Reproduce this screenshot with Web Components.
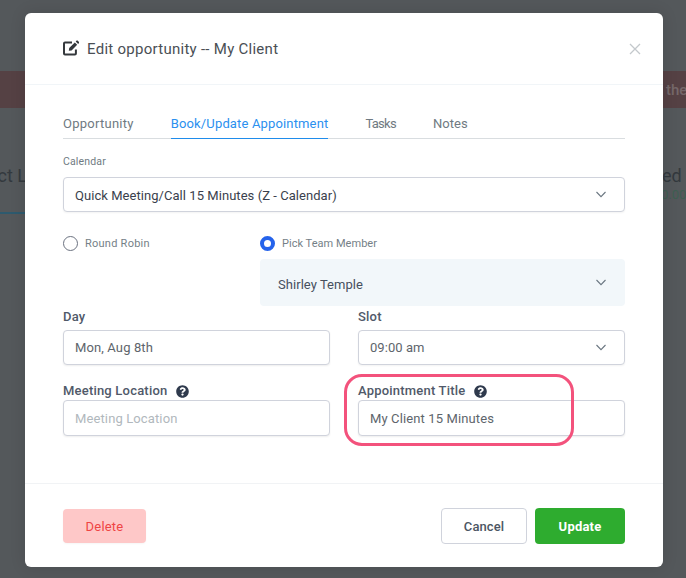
<!DOCTYPE html>
<html>
<head>
<meta charset="utf-8">
<title>Edit opportunity</title>
<style>
  html, body { margin: 0; height: 100%; }
  body { font-family: Roboto, "Liberation Sans", sans-serif; overflow: hidden; }
</style>
</head>
<body>
<page-backdrop>
  <opportunity-modal heading="Edit opportunity -- My Client">
    <tab-bar></tab-bar>
    <form-field caption="Calendar" small>
      <select-box value="Quick Meeting/Call 15 Minutes (Z - Calendar)" strong></select-box>
    </form-field>
    <team-picker></team-picker>
    <div style="display:grid;grid-template-columns:267px 267px;column-gap:28px;row-gap:0">
      <form-field caption="Day"><text-box value="Mon, Aug 8th"></text-box></form-field>
      <form-field caption="Slot"><select-box value="09:00 am"></select-box></form-field>
      <form-field caption="Meeting Location" help tall><text-box placeholder="Meeting Location" tall></text-box></form-field>
      <form-field caption="Appointment Title" help tall marked><text-box value="My Client 15 Minutes" tall></text-box></form-field>
    </div>
  </opportunity-modal>
</page-backdrop>

<script>
const CHEVRON = `<svg width="12" height="8" viewBox="0 0 12 8" fill="none" stroke="currentColor" stroke-width="1.1"><path d="M1.5 1 6 5.6 10.5 1"/></svg>`;
const HELP = `<svg width="13" height="13" viewBox="0 0 512 512" fill="#2f3a4d"><path d="M504 256c0 137-111 248-248 248S8 393 8 256 119 8 256 8s248 111 248 248zM263 90c-54 0-89 23-116 63-4 5-3 12 3 16l35 26c5 4 13 3 17-2 18-23 30-36 57-36 20 0 45 13 45 33 0 15-12 22-32 33-23 13-54 30-54 71v4c0 7 5 12 12 12h56c7 0 12-5 12-12v-1c0-29 83-30 83-106 0-58-60-101-118-101zm-7 243c-25 0-46 21-46 46s21 46 46 46 46-21 46-46-21-46-46-46z"/></svg>`;

class PageBackdrop extends HTMLElement {
  constructor() {
    super();
    this.attachShadow({ mode: 'open' });
    this.shadowRoot.innerHTML = `
      <style>
        :host { display: block; position: relative; width: 686px; height: 578px; background: #54585b; overflow: hidden; color: #33393e; }
        .banner { position: absolute; left: 0; right: 0; top: 71px; height: 37px; background: #554144; }
        .banner span { position: absolute; left: 666px; top: 10px; font-size: 15px; line-height: 18px; color: #75686a; font-weight: 500; white-space: nowrap; }
        .left { position: absolute; left: 0; top: 165px; width: 25px; height: 49px; overflow: hidden; border-bottom: 2px solid #2e5a6e; box-sizing: border-box; }
        .left span { position: absolute; right: -2px; top: 0; font-size: 18px; line-height: 21px; white-space: nowrap; }
        .right { position: absolute; left: 663px; top: 165px; width: 23px; overflow: hidden; white-space: nowrap; }
        .right div { font-size: 18px; line-height: 21px; margin-left: -1px; }
        .right small { display: block; font-size: 13px; line-height: 16px; color: #3e5f52; margin-top: 1px; margin-left: -2px; }
      </style>
      <div class="banner"><span>the</span></div>
      <div class="left"><span>ct L</span></div>
      <div class="right"><div>ed</div><small>0.00</small></div>
      <slot></slot>
    `;
  }
}

class OpportunityModal extends HTMLElement {
  constructor() {
    super();
    this.attachShadow({ mode: 'open' });
    this.shadowRoot.innerHTML = `
      <style>
        :host { display: flex; flex-direction: column; position: absolute; left: 25px; top: 13px; width: 638px; height: 554px; background: #fff; border-radius: 6px; box-shadow: 0 0 16px rgba(0,0,0,.12); }
        header { height: 72px; box-sizing: border-box; padding: 0 21px 0 38px; display: flex; align-items: center; border-bottom: 1px solid #f1f5f8; flex: none; }
        .icon { display: block; margin-right: 8px; margin-top: -2px; }
        h1 { margin: 0; flex: 1; font-size: 15px; line-height: 20px; font-weight: 400; color: #4a4f55; letter-spacing: .27px; }
        .close { display: block; }
        main { flex: 1; padding: 0 38px; }
        footer { height: 84px; box-sizing: border-box; border-top: 1px solid #f1f3f5; padding: 1px 38px 0; display: flex; align-items: center; gap: 8px; flex: none; }
        footer .gap { flex: 1; }
      </style>
      <header>
        <svg class="icon" width="16" height="16" viewBox="0 0 16 16"><path d="M12.9 9.5v3.9c0 .6-.4 1-1 1H2c-.6 0-1-.4-1-1V3.5c0-.6.4-1 1-1h7" fill="none" stroke="#34383c" stroke-width="2"/><path d="M5.8 10.8 6.2 8l5.6-5.6 2.4 2.4L8.6 10.4z M12.7 1.5l.9-.9c.3-.3.7-.3 1 0l1.4 1.4c.3.3.3.7 0 1l-.9.9z" fill="#34383c"/></svg>
        <h1></h1>
        <svg class="close" width="14" height="14" viewBox="0 0 14 14" stroke="#c3c8cc" stroke-width="1.3"><path d="M2 2l10 10M12 2 2 12"/></svg>
      </header>
      <main><slot></slot></main>
      <footer>
        <action-button kind="delete">Delete</action-button>
        <span class="gap"></span>
        <action-button kind="cancel">Cancel</action-button>
        <action-button kind="update">Update</action-button>
      </footer>
    `;
    this.shadowRoot.querySelector('h1').textContent = this.getAttribute('heading');
  }
}

class TabBar extends HTMLElement {
  constructor() {
    super();
    this.attachShadow({ mode: 'open' });
    // spacing per tab, the reference widths differ a little from plain Roboto
    const tabs = [['Opportunity', .26], ['Book/Update Appointment', .15], ['Tasks', -.7], ['Notes', .06]];
    this.shadowRoot.innerHTML = `
      <style>
        :host { display: flex; gap: 37px; margin-top: 29px; height: 24px; border-bottom: 1px solid #d9dde0; font-size: 13px; color: #6f7a82; }
        span { display: block; height: 25px; line-height: 20px; box-sizing: border-box; white-space: nowrap; }
        .on { color: #2b90ef; border-bottom: 1px solid #1f8ceb; }
      </style>
      ${tabs.map(([t, ls], i) => `<span class="${i === 1 ? 'on' : ''}" style="letter-spacing:${ls}px">${t}</span>`).join('')}
    `;
  }
}

class FormField extends HTMLElement {
  constructor() {
    super();
    this.attachShadow({ mode: 'open' });
    const help = this.hasAttribute('help') ? HELP : '';
    this.shadowRoot.innerHTML = `
      <style>
        :host { display: block; position: relative; margin-top: 1px; }
        :host([small]) { margin-top: 16px; }
        :host([tall]) { margin-top: 17px; }
        label { display: flex; align-items: center; gap: 9px; height: 20px; margin-bottom: 3px; font-size: 13px; font-weight: 500; color: #505969; letter-spacing: .2px; line-height: 20px; }
        :host([tall]) label { margin-bottom: 0; height: 18px; }
        :host([small]) label { font-size: 10.5px; font-weight: 400; color: #6f7a82; height: 14px; margin-bottom: 8px; letter-spacing: .15px; }
        .mark { position: absolute; left: -14px; top: -8px; width: 230px; height: 72px; box-sizing: border-box; border: 3px solid #f3527c; border-radius: 18px; pointer-events: none; }
      </style>
      <label><span></span>${help}</label>
      <slot></slot>
      ${this.hasAttribute('marked') ? '<div class="mark"></div>' : ''}
    `;
    this.shadowRoot.querySelector('label span').textContent = this.getAttribute('caption');
  }
}

class TextBox extends HTMLElement {
  constructor() {
    super();
    this.attachShadow({ mode: 'open' });
    const value = this.getAttribute('value');
    this.shadowRoot.innerHTML = `
      <style>
        :host { display: flex; align-items: center; height: 35px; box-sizing: border-box; padding: 0 11px; background: #fff; border: 1px solid #d0d3dc; border-radius: 4px; box-shadow: 0 1px 2px rgba(0,0,0,.07); font-size: 13px; letter-spacing: .12px; color: #5e656c; }
        :host([tall]) { height: 36px; }
        .ph { color: #b1b8bd; }
      </style>
      <span class="${value ? '' : 'ph'}"></span>
    `;
    this.shadowRoot.querySelector('span').textContent = value || this.getAttribute('placeholder');
  }
}

class SelectBox extends HTMLElement {
  constructor() {
    super();
    this.attachShadow({ mode: 'open' });
    this.shadowRoot.innerHTML = `
      <style>
        :host { display: flex; align-items: center; justify-content: space-between; height: 35px; box-sizing: border-box; padding: 0 17px 0 11px; background: #fff; border: 1px solid #d0d3dc; border-radius: 4px; box-shadow: 0 1px 2px rgba(0,0,0,.05); font-size: 13px; letter-spacing: .05px; color: #5e656c; }
        :host([strong]) { color: #3a3f4d; }
        :host([strong]) span { padding-top: 2px; }
        svg { color: #6a7680; display: block; }
      </style>
      <span></span>${CHEVRON}
    `;
    this.shadowRoot.querySelector('span').textContent = this.getAttribute('value');
  }
}

class TeamPicker extends HTMLElement {
  constructor() {
    super();
    this.attachShadow({ mode: 'open' });
    this.shadowRoot.innerHTML = `
      <style>
        :host { display: grid; grid-template-columns: 197px 365px; margin-top: 23px; font-size: 11px; color: #757f87; }
        .radio { display: flex; align-items: center; gap: 7px; height: 16px; margin-bottom: 8px; }
        i { display: block; width: 15px; height: 15px; box-sizing: border-box; border-radius: 50%; border: 1px solid #6b7280; background: #fff; }
        i.on { border: 4.5px solid #2563eb; }
        .drop { grid-column: 2; display: flex; justify-content: space-between; height: 47px; box-sizing: border-box; padding: 0 18px; background: #f2f7fa; border-radius: 4px; font-size: 13px; color: #47505e; letter-spacing: .05px; }
        .drop span { margin-top: 17px; line-height: 18px; }
        .drop svg { margin-top: 20px; color: #6a7680; }
      </style>
      <div class="radio" style="letter-spacing:.25px"><i></i>Round Robin</div>
      <div class="radio" style="letter-spacing:.03px"><i class="on"></i>Pick Team Member</div>
      <div class="drop"><span>Shirley Temple</span>${CHEVRON}</div>
    `;
  }
}

class ActionButton extends HTMLElement {
  constructor() {
    super();
    this.attachShadow({ mode: 'open' });
    this.shadowRoot.innerHTML = `
      <style>
        :host { display: flex; align-items: center; justify-content: center; box-sizing: border-box; height: 36px; border-radius: 4px; font-size: 13px; font-weight: 500; letter-spacing: .1px; }
        :host([kind=delete]) { width: 83px; height: 34px; background: #fec8c8; color: #ef4444; font-weight: 400; box-shadow: 0 1px 2px rgba(0,0,0,.04); letter-spacing: .2px; }
        :host([kind=cancel]) { width: 86px; background: #fff; border: 1px solid #d0d3dc; color: #4b5563; }
        :host([kind=update]) { width: 90px; background: #2eac2f; color: #fff; font-weight: 700; letter-spacing: .2px; }
      </style>
      <slot></slot>
    `;
  }
}

customElements.define('page-backdrop', PageBackdrop);
customElements.define('opportunity-modal', OpportunityModal);
customElements.define('tab-bar', TabBar);
customElements.define('form-field', FormField);
customElements.define('text-box', TextBox);
customElements.define('select-box', SelectBox);
customElements.define('team-picker', TeamPicker);
customElements.define('action-button', ActionButton);
</script>
</body>
</html>
